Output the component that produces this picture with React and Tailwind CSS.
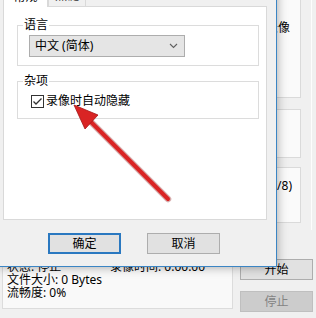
export default function App() {
  return (
    <div className="relative w-[316px] h-[318px] overflow-hidden bg-[#f0f0f0] text-[12px] leading-[16px] text-black font-['Noto_Sans','Noto_Sans_CJK_SC',sans-serif]">
      {/* main window behind */}
      <div className="flex h-full">
        <div className="flex flex-col w-[236px]">
          <div className="mt-auto mb-[9px] ml-[2px] w-[231px] h-[69px] bg-[#f9f9f9] border border-[#dcdcdc] pl-[4px] pt-[19px] flex flex-col leading-[13px]">
            <div className="flex">
              <span className="w-[103px]">状态: 停止</span>
              <span>录像时间: 0:00:00</span>
            </div>
            <div>文件大小: 0 Bytes</div>
            <div>流畅度: 0%</div>
          </div>
        </div>
        <div className="flex flex-col w-[80px]">
          <div className="h-[230px] w-[76px] border-r border-[#fdfdfd] flex flex-col">
            <div className="ml-[4px] mt-[-1px] w-[61px] h-[99px] bg-[#fafafa] border border-[#dadada] flex justify-end pr-[10px] pt-[20px]">
              <span>录像</span>
            </div>
            <div className="ml-[4px] mt-[11px] w-[61px] h-[49px] bg-[#fafafa] border border-[#dadada]" />
            <div className="ml-[4px] mt-[9px] w-[61px] h-[56px] bg-[#fafafa] border border-[#dadada] flex justify-end pr-[8px] pt-[10px]">
              <span>(7/8)</span>
            </div>
          </div>
          <button className="ml-[4px] mt-[29px] w-[73px] h-[21px] bg-[#e1e1e1] border border-[#adadad] flex items-center justify-center">
            开始
          </button>
          <button className="ml-[4px] mt-[11px] w-[73px] h-[21px] bg-[#cccccc] border border-[#bfbfbf] text-[#838383] flex items-center justify-center">
            停止
          </button>
        </div>
      </div>

      {/* dialog */}
      <div className="absolute left-[-1px] top-[-14px] w-[278px] h-[281px] bg-[#f0f0f0] border border-[#3b85c4] shadow-[0_0_10px_rgba(0,0,0,0.35)] flex flex-col">
        <div className="relative z-10 flex items-end h-[19px] pl-[3px]">
          <div className="w-[45px] h-[20px] -mb-px bg-white border border-b-0 border-[#d9d9d9] flex justify-center pt-px">
            常规
          </div>
          <div className="w-[38px] h-[17px] bg-[#f0f0f0] border border-b-0 border-[#d9d9d9] flex justify-center text-[#333]">
            <span className="-mt-[2px]">热键</span>
          </div>
        </div>
        <div className="ml-[3px] w-[264px] h-[214px] bg-white border border-[#d9d9d9] flex flex-col">
          <fieldset className="ml-[13px] mt-[10px] w-[242px] border border-[#dcdcdc] pb-[8px]">
            <legend className="ml-[5px] px-[1px] leading-[16px]">语言</legend>
            <div className="ml-[11px] mt-[2px] w-[156px] h-[22px] bg-[#e5e5e5] border border-[#adadad] flex items-center justify-between pl-[5px] pr-[6px]">
              <span>中文 (简体)</span>
              <svg width="9" height="6" viewBox="0 0 9 6">
                <polyline points="1,1 4.5,4.5 8,1" fill="none" stroke="#606060" strokeWidth="1.1" />
              </svg>
            </div>
          </fieldset>
          <fieldset className="ml-[13px] mt-[7px] w-[242px] border border-[#dcdcdc] pb-[9px]">
            <legend className="ml-[5px] px-[1px] leading-[16px]">杂项</legend>
            <label className="ml-[13px] mt-[4px] flex items-center h-[16px]">
              <span className="w-[13px] h-[13px] border border-[#333333] bg-white flex items-center justify-center">
                <svg width="11" height="11" viewBox="0 0 11 11">
                  <polyline points="1.5,5.5 4,8 9.5,2.5" fill="none" stroke="#333333" strokeWidth="1.3" />
                </svg>
              </span>
              <span className="ml-[2px]">录像时自动隐藏</span>
            </label>
          </fieldset>
        </div>
        <div className="flex mt-[13px] ml-[48px] gap-[26px]">
          <button className="w-[73px] h-[21px] bg-[#e1e1e1] border-2 border-[#2a78c0] flex items-center justify-center">
            确定
          </button>
          <button className="w-[73px] h-[21px] bg-[#e1e1e1] border border-[#adadad] flex items-center justify-center">
            取消
          </button>
        </div>
      </div>

      {/* red arrow */}
      <svg className="absolute left-0 top-0 pointer-events-none" width="316" height="318" viewBox="0 0 316 318">
        <line x1="168" y1="199" x2="90" y2="121" stroke="#8a1010" strokeOpacity="0.35" strokeWidth="6.5" strokeLinecap="round" />
        <line x1="168" y1="199" x2="90" y2="121" stroke="#d92424" strokeWidth="4" strokeLinecap="round" />
        <polygon points="74,105 98,115 85,129" fill="#d92424" stroke="#a51515" strokeWidth="0.8" strokeLinejoin="round" />
      </svg>
    </div>
  );
}
